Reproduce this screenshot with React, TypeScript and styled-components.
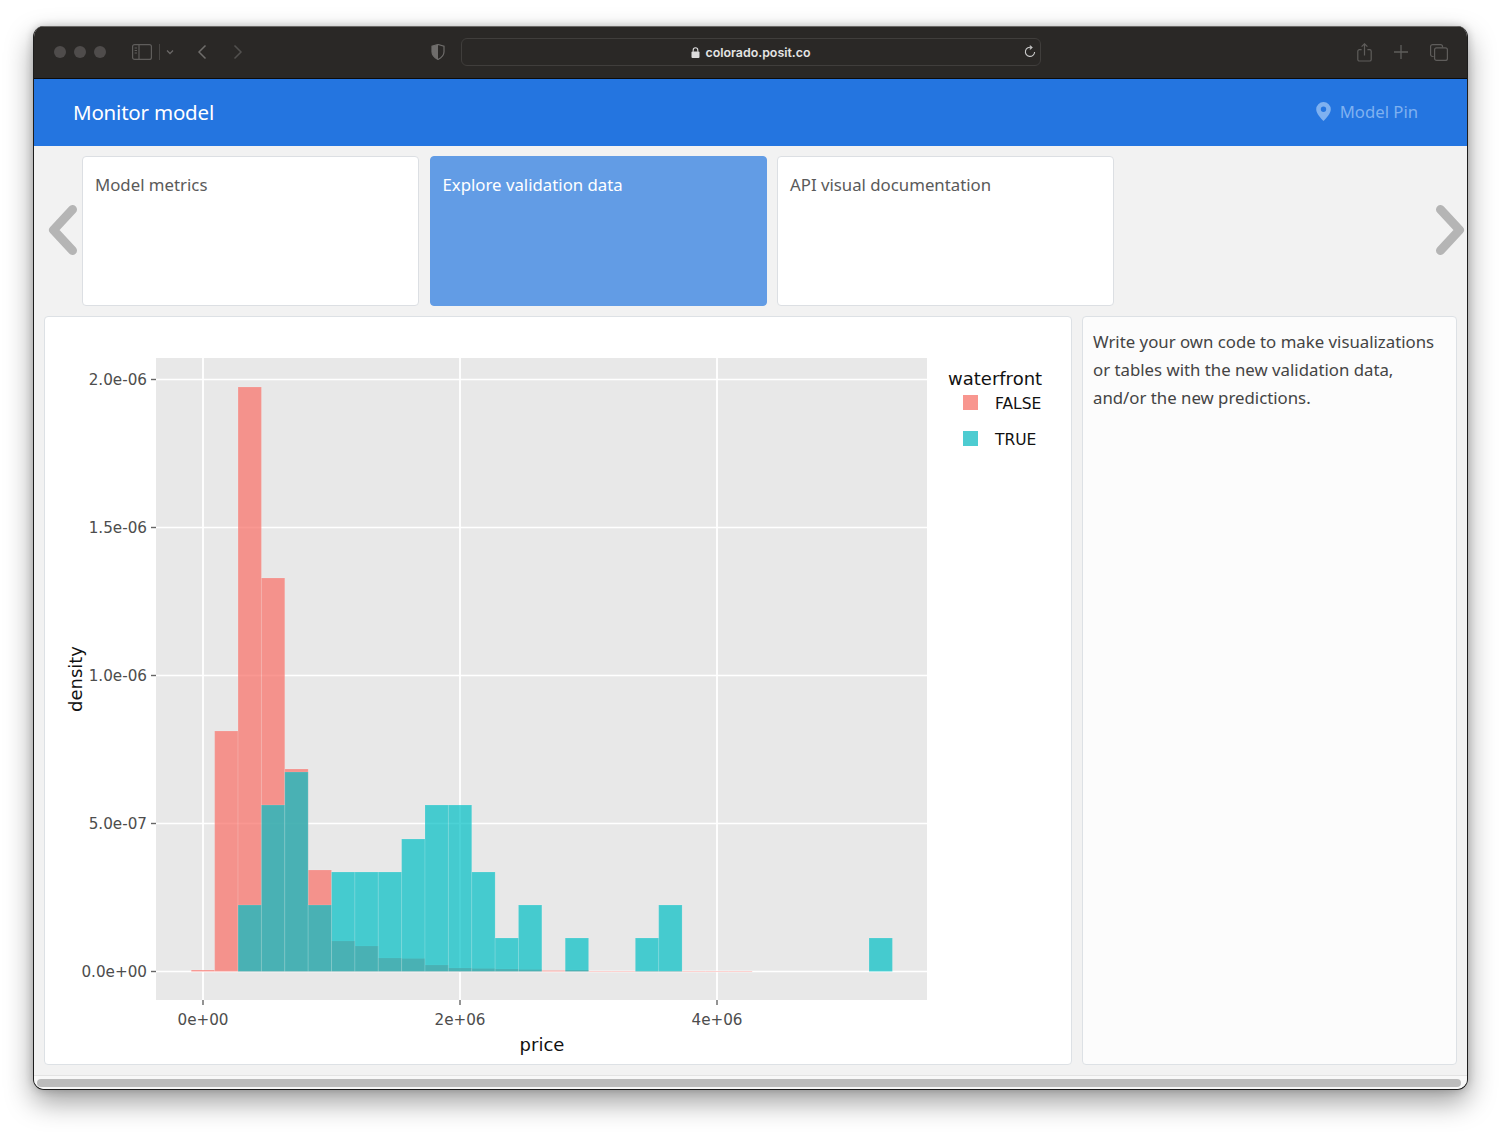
import styled, { createGlobalStyle } from "styled-components";

const falseBars = [970, 731, 387, 578, 769, 870, 941, 946, 958, 958.5, 965, 968, 968.5, 969, 969.5, 970.5, 970, 971, 971, 971, 971, 971, 971, 971];
const trueBars: Array<[number, number]> = [
  [2, 905], [3, 805], [4, 772], [5, 905], [6, 872], [7, 872], [8, 872], [9, 839], [10, 805],
  [11, 805], [12, 872], [13, 938], [14, 905], [16, 938], [19, 938], [20, 905], [29, 938],
];
const binX = (i: number) => 191.3 + 23.37 * i;
const BASE = 971.5;

const xTicks = [[203, "0e+00"], [460, "2e+06"], [717, "4e+06"]] as const;
const yTicks = [[379.5, "2.0e-06"], [527.5, "1.5e-06"], [675.5, "1.0e-06"], [823.5, "5.0e-07"], [971.5, "0.0e+00"]] as const;

const Chart = () => (
  <ChartSvg viewBox="45 317 1026 747">
    <rect x="156" y="358" width="771" height="642" fill="#e8e8e8" />
    {xTicks.map(([x]) => (
      <g key={x}>
        <line x1={x} x2={x} y1="358" y2="1000" stroke="#fff" strokeWidth="1.8" />
        <line x1={x} x2={x} y1="1000" y2="1005" stroke="#666" strokeWidth="1.4" />
      </g>
    ))}
    {yTicks.map(([y]) => (
      <g key={y}>
        <line x1="156" x2="927" y1={y} y2={y} stroke="#fff" strokeWidth="1.4" />
        <line x1="151" x2="156" y1={y} y2={y} stroke="#666" strokeWidth="1.4" />
      </g>
    ))}
    {falseBars.map((top, i) => (
      <rect key={i} x={binX(i)} y={top} width="23.37" height={BASE - top} fill="#f8766d" fillOpacity="0.75" stroke="#fff" strokeOpacity="0.13" strokeWidth="1" />
    ))}
    {trueBars.map(([i, top]) => (
      <rect key={i} x={binX(i)} y={top} width="23.37" height={BASE - top} fill="#00bfc4" fillOpacity="0.7" stroke="#fff" strokeOpacity="0.13" strokeWidth="1" />
    ))}
    {xTicks.map(([x, label]) => (
      <TickText key={label} x={x} y="1025" textAnchor="middle">{label}</TickText>
    ))}
    {yTicks.map(([y, label]) => (
      <TickText key={label} x="147" y={y + 5} textAnchor="end">{label}</TickText>
    ))}
    <AxisText x="542" y="1051" textAnchor="middle">price</AxisText>
    <AxisText x="0" y="0" textAnchor="middle" transform="translate(82 679) rotate(-90)">density</AxisText>
    <AxisText x="948" y="385">waterfront</AxisText>
    <rect x="963" y="395" width="15" height="15" fill="#f8968f" />
    <rect x="963" y="431" width="15" height="15" fill="#4dccd1" />
    <LegendText x="995" y="409">FALSE</LegendText>
    <LegendText x="995" y="445">TRUE</LegendText>
  </ChartSvg>
);

const App = () => (
  <>
    <Global />
    <BrowserWindow>
      <Toolbar>
        <Lights>
          <Light />
          <Light />
          <Light />
        </Lights>
        <SidebarGroup>
          <svg width="20" height="16" viewBox="0 0 20 16" fill="none" stroke="#5f5d5b" strokeWidth="1.2">
            <rect x="0.6" y="0.6" width="18.8" height="14.8" rx="2" />
            <path d="M7 1v14" />
            <path d="M2.6 4h2.4M2.6 6.5h2.4M2.6 9h2.4" />
          </svg>
          <Divider />
          <svg width="8" height="6" viewBox="0 0 8 6" fill="none" stroke="#6a6866" strokeWidth="1.3">
            <path d="M1 1.5l3 3 3-3" />
          </svg>
        </SidebarGroup>
        <NavGroup>
          <svg width="10" height="16" viewBox="0 0 10 16" fill="none" stroke="#6f6d6b" strokeWidth="1.5">
            <path d="M8.5 1.5L2 8l6.5 6.5" />
          </svg>
          <svg width="10" height="16" viewBox="0 0 10 16" fill="none" stroke="#52504e" strokeWidth="1.5">
            <path d="M1.5 1.5L8 8l-6.5 6.5" />
          </svg>
        </NavGroup>
        <ShieldSlot>
          <svg width="14" height="16" viewBox="0 0 14 16">
            <path d="M7 .5L1 2.2v5.6c0 3.6 2.6 6 6 7.7 3.4-1.7 6-4.1 6-7.7V2.2z" fill="none" stroke="#6f6d6b" strokeWidth="1.2" />
            <path d="M7 .5L1 2.2v5.6c0 3.6 2.6 6 6 7.7z" fill="#6f6d6b" />
          </svg>
        </ShieldSlot>
        <UrlBar>
          <UrlText>
            <svg width="9" height="11" viewBox="0 0 9 11">
              <rect x="0.5" y="4.5" width="8" height="6.5" rx="1" fill="#dcdcdc" />
              <path d="M2.2 4.8V3a2.3 2.3 0 0 1 4.6 0v1.8" fill="none" stroke="#dcdcdc" strokeWidth="1.1" />
            </svg>
            colorado.posit.co
          </UrlText>
          <Reload>
            <svg width="12" height="13" viewBox="0 0 12 13" fill="none" stroke="#c9c9c9" strokeWidth="1.1">
              <path d="M7.6 2.5A4.6 4.6 0 1 0 10.6 7" />
              <path d="M5.8.6l2.2 1.9-2.2 1.9" />
            </svg>
          </Reload>
        </UrlBar>
        <RightTools>
          <svg width="15" height="19" viewBox="0 0 15 19" fill="none" stroke="#5f5d5b" strokeWidth="1.2">
            <path d="M4.6 6.6H2.4a1.6 1.6 0 0 0-1.6 1.6v8.2A1.6 1.6 0 0 0 2.4 18h10.2a1.6 1.6 0 0 0 1.6-1.6V8.2a1.6 1.6 0 0 0-1.6-1.6h-2.2" />
            <path d="M7.5 12.4V1M4.6 3.6L7.5.8l2.9 2.8" />
          </svg>
          <svg width="14" height="14" viewBox="0 0 14 14" stroke="#5f5d5b" strokeWidth="1.3">
            <path d="M7 0v14M0 7h14" />
          </svg>
          <svg width="18" height="17" viewBox="0 0 18 17" fill="none" stroke="#5f5d5b" strokeWidth="1.2">
            <path d="M3.6 12.5H2.6A2 2 0 0 1 .6 10.5V2.6a2 2 0 0 1 2-2h7.900a2 2 0 0 1 2 2v1" />
            <rect x="4.6" y="3.8" width="12.8" height="12.6" rx="2" />
          </svg>
        </RightTools>
      </Toolbar>
      <Header>
        <Title>Monitor model</Title>
        <PinLabel>
          <svg width="15" height="19" viewBox="0 0 15 19">
            <path fillRule="evenodd" fill="#7fb1f0" d="M7.5 0A7.3 7.3 0 0 0 .2 7.3C.2 11.6 5 16.4 7.5 19c2.5-2.6 7.3-7.4 7.3-11.700A7.3 7.3 0 0 0 7.5 0zm0 4.600a2.700 2.700 0 1 1 0 5.400 2.700 2.700 0 0 1 0-5.400z" />
          </svg>
          Model Pin
        </PinLabel>
      </Header>
      <Content>
        <Carousel>
          <Arrow>
            <svg width="30" height="52" viewBox="0 0 30 52" fill="none" stroke="#b5b5b5" strokeWidth="9" strokeLinecap="round" strokeLinejoin="round">
              <path d="M24.5 4.5L5.5 25l19 20.500" />
            </svg>
          </Arrow>
          <Cards>
            <Card>Model metrics</Card>
            <Card $active>Explore validation data</Card>
            <Card>API visual documentation</Card>
          </Cards>
          <Arrow>
            <svg width="30" height="52" viewBox="0 0 30 52" fill="none" stroke="#b5b5b5" strokeWidth="9" strokeLinecap="round" strokeLinejoin="round">
              <path d="M5.5 4.5L24.5 25l-19 20.500" />
            </svg>
          </Arrow>
        </Carousel>
        <Main>
          <ChartCard>
            <Chart />
          </ChartCard>
          <SideCard>
            Write your own code to make visualizations or tables with the new validation data, and/or the new predictions.
          </SideCard>
        </Main>
      </Content>
      <ScrollTrack>
        <ScrollThumb />
      </ScrollTrack>
    </BrowserWindow>
  </>
);

export default App;

const Global = createGlobalStyle`
  html, body {
    margin: 0;
    background: #fff;
  }
  body {
    padding: 26px 33px 42px 33px;
    font-family: "Noto Sans", sans-serif;
  }
  svg {
    display: block;
    flex-shrink: 0;
  }
`;
const BrowserWindow = styled.div`
  width: 1435px;
  height: 1064px;
  display: flex;
  flex-direction: column;
  background: #f2f2f2;
  border-radius: 11px;
  border: 1px solid #1d1d1d;
  border-top: 0;
  box-sizing: border-box;
  overflow: hidden;
  box-shadow: 0 12px 28px rgba(0, 0, 0, 0.38), 0 0 8px rgba(0, 0, 0, 0.2);
`;
const Toolbar = styled.div`
  height: 53px;
  flex-shrink: 0;
  box-sizing: border-box;
  display: flex;
  align-items: center;
  padding: 0 0 1px 19px;
  background: #2a2826;
  border-top: 1px solid #6a6866;
  border-bottom: 1px solid #0c0c0c;
`;
const Lights = styled.div`
  display: flex;
  gap: 8px;
  margin-left: 1px;
`;
const Light = styled.span`
  width: 12px;
  height: 12px;
  border-radius: 50%;
  background: #4f4c4b;
`;
const SidebarGroup = styled.div`
  display: flex;
  align-items: center;
  margin-left: 26px;
`;
const Divider = styled.span`
  width: 1px;
  height: 16px;
  margin: 0 6px 0 7px;
  background: #474543;
`;
const NavGroup = styled.div`
  display: flex;
  align-items: center;
  gap: 26px;
  margin-left: 23px;
`;
const ShieldSlot = styled.div`
  margin-left: 188px;
`;
const UrlBar = styled.div`
  width: 580px;
  height: 28px;
  margin-left: 16px;
  box-sizing: border-box;
  display: flex;
  align-items: center;
  justify-content: center;
  position: relative;
  border: 1px solid #403e3c;
  border-radius: 6px;
`;
const UrlText = styled.div`
  display: flex;
  align-items: center;
  gap: 5px;
  color: #e4e4e4;
  font: 600 12.4px "Inter", sans-serif;
`;
const Reload = styled.span`
  position: absolute;
  right: 4px;
  top: 6px;
`;
const RightTools = styled.div`
  display: flex;
  align-items: center;
  gap: 22px;
  margin-left: auto;
  margin-right: 19px;
`;
const Header = styled.div`
  height: 67px;
  flex-shrink: 0;
  box-sizing: border-box;
  display: flex;
  align-items: center;
  justify-content: space-between;
  padding: 0 49px 2px 39px;
  background: #2475e0;
`;
const Title = styled.div`
  color: #fff;
  font-size: 20.5px;
  letter-spacing: -0.2px;
`;
const PinLabel = styled.div`
  display: flex;
  align-items: center;
  gap: 9px;
  color: #7fb1f0;
  font-size: 16.7px;
`;
const Content = styled.div`
  flex: 1;
  min-height: 0;
  display: flex;
  flex-direction: column;
  gap: 10px;
  padding-top: 10px;
`;
const Carousel = styled.div`
  height: 150px;
  display: flex;
  align-items: center;
  justify-content: space-between;
  padding: 0 2px 0 14px;
`;
const Arrow = styled.div`
  width: 30px;
`;
const Cards = styled.div`
  flex: 1;
  display: flex;
  gap: 10.5px;
  height: 150px;
  margin-left: 4px;
`;
const Card = styled.div<{ $active?: boolean }>`
  width: 337px;
  box-sizing: border-box;
  padding: 16px 12px;
  font-size: 16.8px;
  line-height: 24px;
  border-radius: 4px;
  border: 1px solid ${(props) => (props.$active ? "#629ce5" : "#dcdfe3")};
  background: ${(props) => (props.$active ? "#629ce5" : "#fff")};
  color: ${(props) => (props.$active ? "#fff" : "#5a5a5a")};
`;
const Main = styled.div`
  height: 749px;
  display: flex;
  gap: 10px;
  padding: 0 10px;
`;
const ChartCard = styled.div`
  width: 1028px;
  box-sizing: border-box;
  border: 1px solid #dde1e5;
  border-radius: 4px;
  background: #fff;
`;
const ChartSvg = styled.svg`
  width: 1026px;
  height: 747px;
`;
const TickText = styled.text`
  font: 15.2px "DejaVu Sans", sans-serif;
  fill: #4d4d4d;
`;
const AxisText = styled.text`
  font: 18px "DejaVu Sans", sans-serif;
  fill: #111;
`;
const LegendText = styled.text`
  font: 15.5px "DejaVu Sans", sans-serif;
  fill: #111;
`;
const SideCard = styled.div`
  width: 375px;
  box-sizing: border-box;
  padding: 11px 10px;
  border: 1px solid #dde1e5;
  border-radius: 4px;
  background: #fcfcfc;
  color: #444;
  font-size: 16.8px;
  line-height: 28px;
`;
const ScrollTrack = styled.div`
  height: 14px;
  flex-shrink: 0;
  box-sizing: border-box;
  margin-top: 10px;
  padding: 3px 6px 2px 3px;
  border-top: 1px solid #e3e3e3;
  background: #f8f8f8;
`;
const ScrollThumb = styled.div`
  height: 8px;
  border-radius: 4px;
  background: #bcbcbc;
`;
